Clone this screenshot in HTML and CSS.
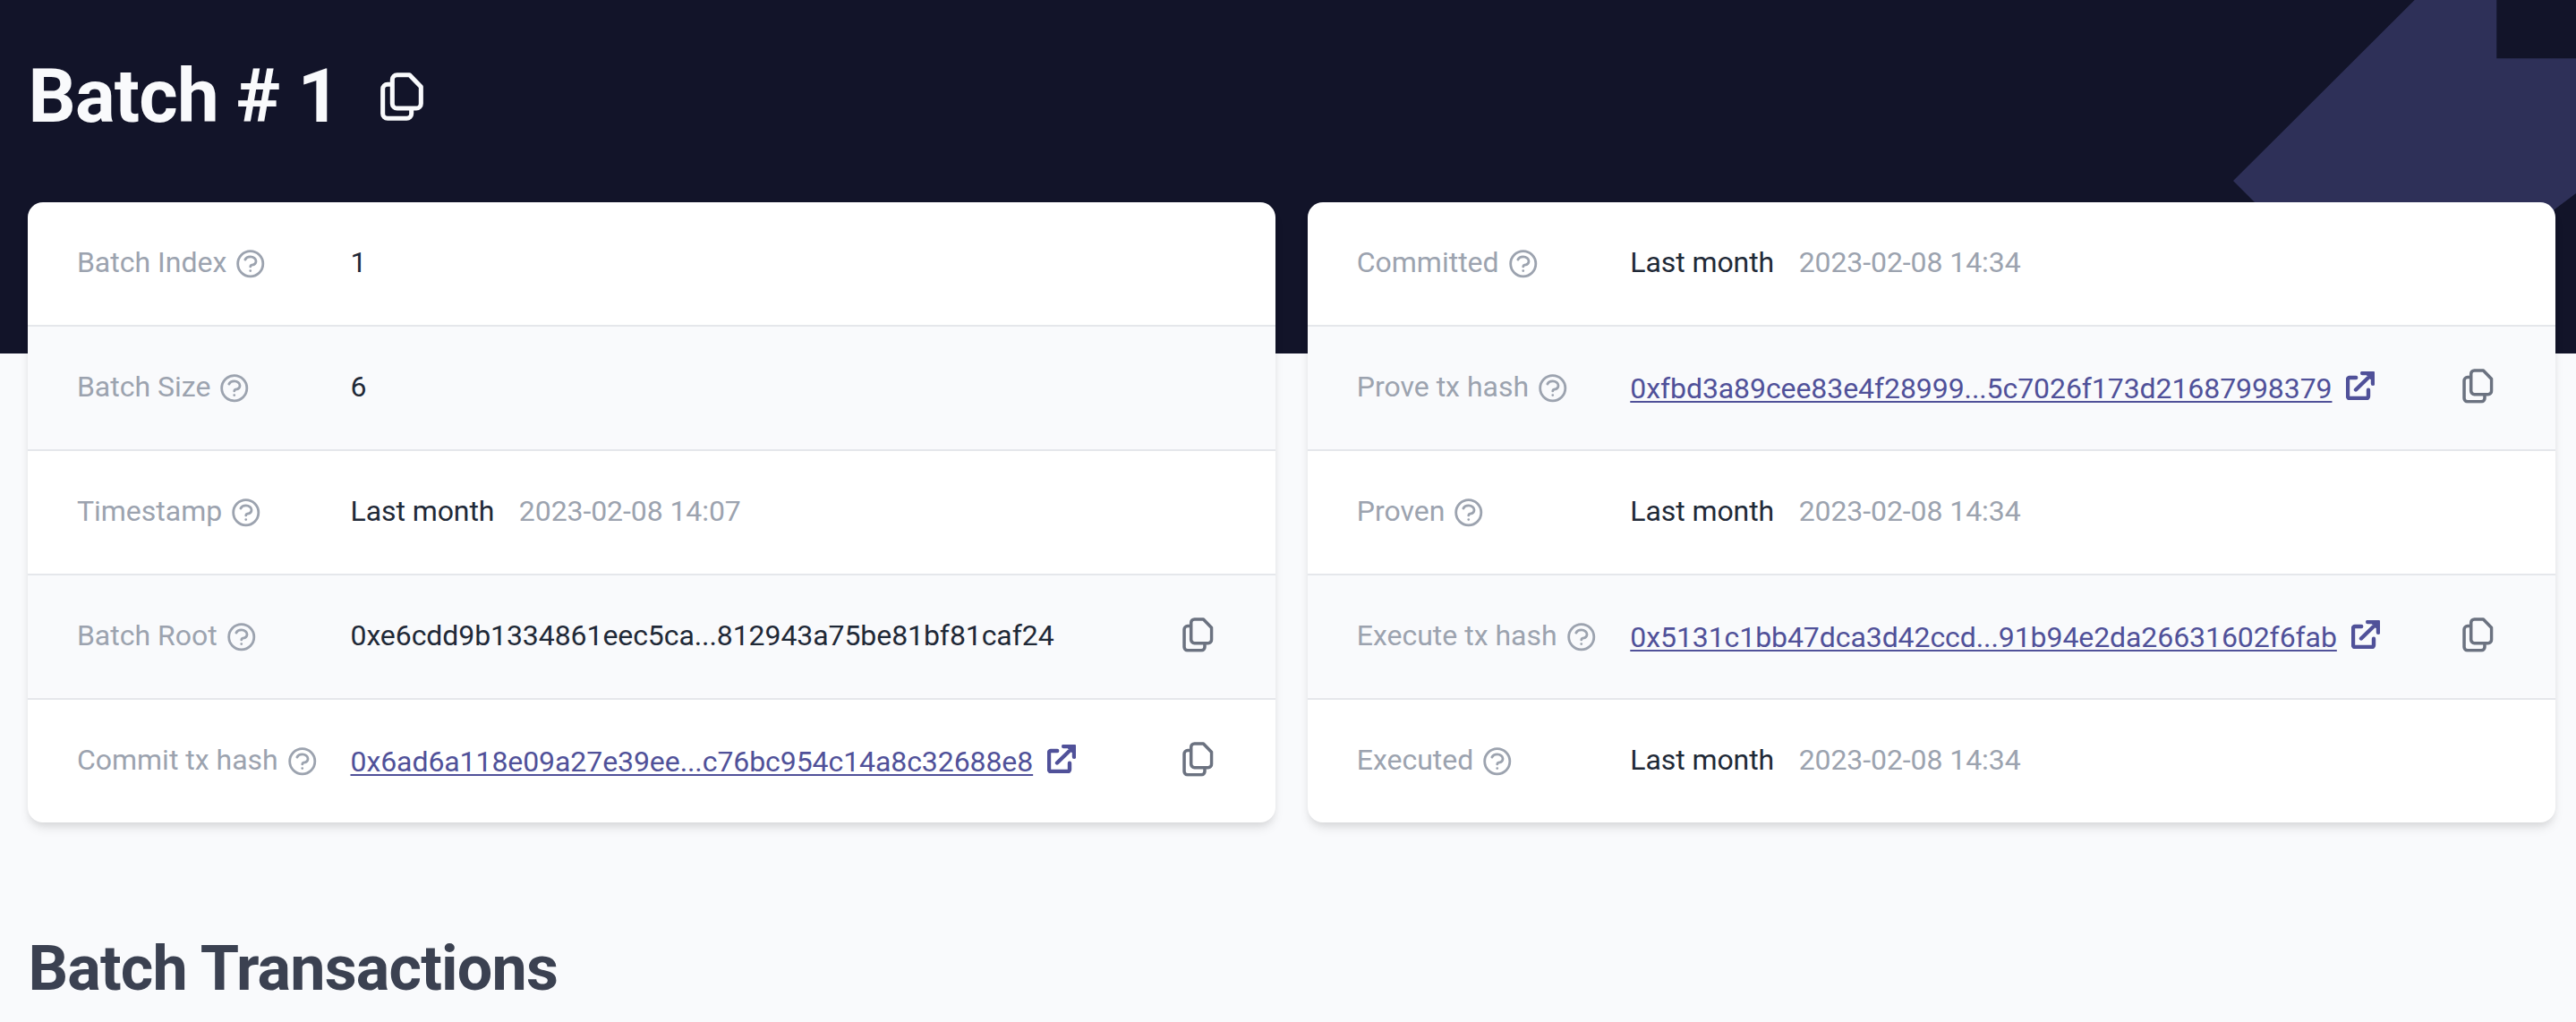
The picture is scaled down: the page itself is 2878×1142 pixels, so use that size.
FILE: index.html
```html
<!DOCTYPE html>
<html lang="en">
<head>
<meta charset="utf-8">
<title>Batch # 1</title>
<link rel="stylesheet" href="styles.css">
</head>
<body>
<svg class="sprite" aria-hidden="true">
  <symbol id="help" viewBox="0 0 24 24"><path d="M8.228 9c.549-1.165 2.03-2 3.772-2 2.21 0 4 1.343 4 3 0 1.4-1.278 2.575-3.006 2.907-.542.104-.994.54-.994 1.093m0 3h.01M21 12a9 9 0 11-18 0 9 9 0 0118 0z"/></symbol>
  <symbol id="copy" viewBox="0 0 18 20.25"><path d="M7 1h5.2L17 6v7a2 2 0 0 1-2 2H7a2 2 0 0 1-2-2V3a2 2 0 0 1 2-2zM5 5H3a2 2 0 0 0-2 2v10.25a2 2 0 0 0 2 2h8a2 2 0 0 0 2-2V15"/></symbol>
  <symbol id="external" viewBox="0 0 32 32"><path d="M11.2 7H4a2 2 0 0 0-2 2v19a2 2 0 0 0 2 2h19a2 2 0 0 0 2-2v-7.2M18.2 2H30v11.8M29 3L11 20.5M25 3.5h3.5V7"/></symbol>
</svg>
<header class="banner">
  <svg class="banner-shape" viewBox="0 0 383 260" aria-hidden="true"><path d="M202.7 0L0 202l58 58h300l1-26 24-18V65.3h-88.7V0z"/></svg>
</header>
<main class="page">
  <div class="title">
    <h1>Batch # 1</h1>
    <svg class="icon-copy-lg"><use href="#copy"/></svg>
  </div>
  <div class="cards">
    <section class="card">
      <div class="row"><div class="label">Batch Index<svg class="icon-help"><use href="#help"/></svg></div><div class="value">1</div></div>
      <div class="row"><div class="label">Batch Size<svg class="icon-help"><use href="#help"/></svg></div><div class="value">6</div></div>
      <div class="row"><div class="label">Timestamp<svg class="icon-help"><use href="#help"/></svg></div><div class="value">Last month<span class="date">2023-02-08 14:07</span></div></div>
      <div class="row"><div class="label">Batch Root<svg class="icon-help"><use href="#help"/></svg></div><div class="value">0xe6cdd9b1334861eec5ca...812943a75be81bf81caf24</div><svg class="icon-copy"><use href="#copy"/></svg></div>
      <div class="row"><div class="label">Commit tx hash<svg class="icon-help"><use href="#help"/></svg></div><div class="value"><a class="link" href="#">0x6ad6a118e09a27e39ee...c76bc954c14a8c32688e8</a><svg class="icon-external"><use href="#external"/></svg></div><svg class="icon-copy"><use href="#copy"/></svg></div>
    </section>
    <section class="card">
      <div class="row"><div class="label">Committed<svg class="icon-help"><use href="#help"/></svg></div><div class="value">Last month<span class="date">2023-02-08 14:34</span></div></div>
      <div class="row"><div class="label">Prove tx hash<svg class="icon-help"><use href="#help"/></svg></div><div class="value"><a class="link" href="#">0xfbd3a89cee83e4f28999...5c7026f173d21687998379</a><svg class="icon-external"><use href="#external"/></svg></div><svg class="icon-copy"><use href="#copy"/></svg></div>
      <div class="row"><div class="label">Proven<svg class="icon-help"><use href="#help"/></svg></div><div class="value">Last month<span class="date">2023-02-08 14:34</span></div></div>
      <div class="row"><div class="label">Execute tx hash<svg class="icon-help"><use href="#help"/></svg></div><div class="value"><a class="link" href="#">0x5131c1bb47dca3d42ccd...91b94e2da26631602f6fab</a><svg class="icon-external"><use href="#external"/></svg></div><svg class="icon-copy"><use href="#copy"/></svg></div>
      <div class="row"><div class="label">Executed<svg class="icon-help"><use href="#help"/></svg></div><div class="value">Last month<span class="date">2023-02-08 14:34</span></div></div>
    </section>
  </div>
  <h2>Batch Transactions</h2>
</main>
</body>
</html>
```
FILE: styles.css
```css
* { box-sizing: border-box; }
body {
  margin: 0;
  height: 1142px;
  overflow: hidden;
  position: relative;
  background: #f9fafc;
  font-family: Roboto, "Liberation Sans", sans-serif;
  font-size: 32px;
  line-height: 48px;
}
h1, h2 { margin: 0; font-weight: 700; letter-spacing: -0.8px; }
svg { flex: none; fill: none; stroke: currentColor; stroke-linecap: round; stroke-linejoin: round; }
.sprite { position: absolute; width: 0; height: 0; }

/* dark backdrop that the cards overlap */
.banner { position: absolute; inset: 0 0 auto; height: 394.67px; background: #121429; overflow: hidden; }
.banner-shape { position: absolute; top: 0; right: 0; width: 383px; height: 260px; fill: #2e3058; stroke: none; }

.page { position: relative; padding: 0 23px 0 31.4px; }
.title { display: flex; align-items: center; height: 226.33px; padding-bottom: 11px; color: #f9fafc; }
.title h1 { font-size: 83.5px; line-height: 100px; }
.icon-copy-lg { width: 48px; height: 54px; margin: 0 0 0 45px; stroke-width: 1.9; overflow: visible; }

.cards { display: grid; grid-template-columns: 1fr 1fr; gap: 36px; }
.card {
  overflow: hidden;
  border-radius: 17px;
  background: #fff;
  box-shadow: 0 8px 12px -2px rgba(0, 0, 0, .1), 0 4px 8px -2px rgba(0, 0, 0, .06);
}
.row { display: flex; align-items: center; height: 139px; padding: 0 69.5px 0 54.5px; border-bottom: 2px solid #e5e7eb; }
.row:nth-child(even) { background: #f9fafc; }
.row:last-child { height: 137px; border-bottom: 0; }
.label, .value { display: flex; align-items: center; padding-bottom: 3px; white-space: nowrap; }
.label { width: 305.6px; color: #9ca3af; }
.value { flex: 1; color: #1f2937; letter-spacing: -0.08px; }
.date { margin-left: 27.5px; color: #9ca3af; }
.link { padding-top: 4px; color: #505199; text-decoration: underline; text-decoration-thickness: 2px; text-underline-offset: 3px; }
.icon-help { width: 37.5px; height: 37.5px; margin: 3px 0 0 8px; stroke-width: 1.8; }
.icon-copy { width: 34.7px; height: 38.7px; margin-bottom: 4px; color: #6b7280; stroke-width: 1.85; overflow: visible; }
.icon-external { width: 32px; height: 32px; margin: 0 0 2px 16px; color: #505199; stroke-width: 4.4; overflow: visible; }

h2 { margin-top: 125px; font-size: 70px; line-height: 76px; color: #3b4151; }
```
